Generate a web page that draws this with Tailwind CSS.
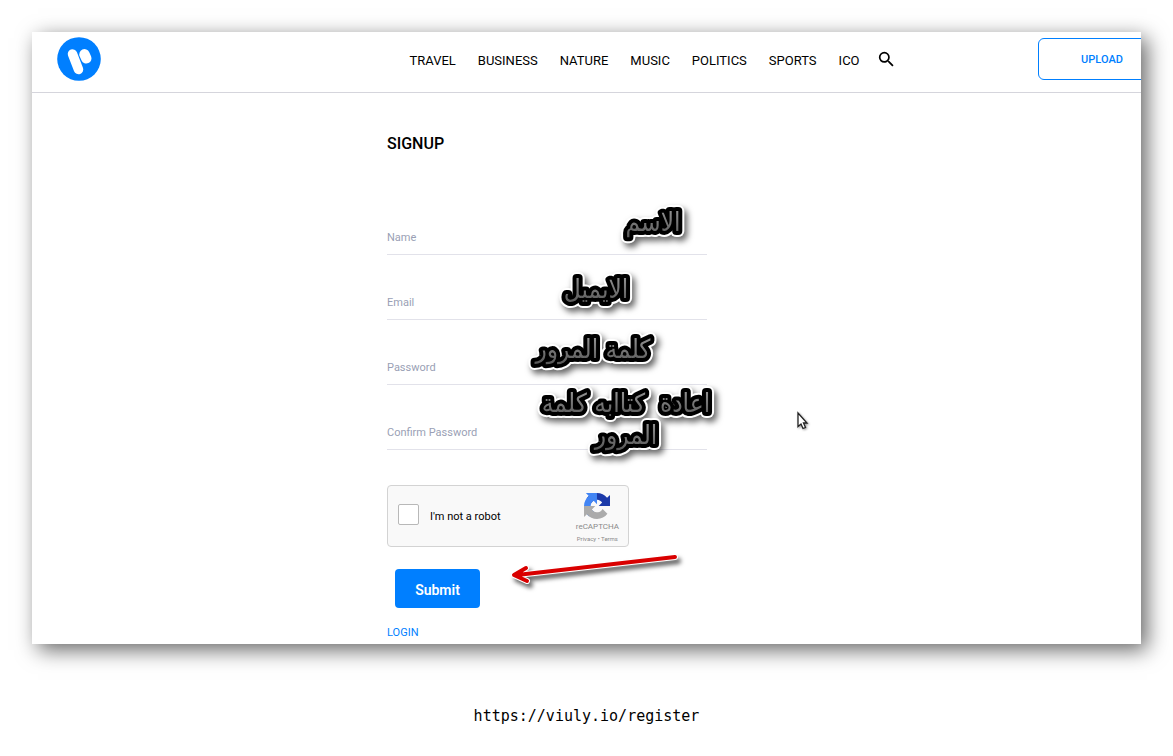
<!DOCTYPE html>
<html lang="en">
<head>
  <meta charset="UTF-8" />
  <meta name="viewport" content="width=device-width, initial-scale=1.0" />
  <title>Viuly - Signup</title>
  <script src="https://cdn.jsdelivr.net/npm/@tailwindcss/browser@4"></script>
</head>
<body class="bg-white text-black font-[Roboto,sans-serif] p-8">
  <div class="bg-white shadow-[6px_6px_20px_rgba(0,0,0,0.6)]">

    <!-- Header -->
    <header class="flex items-center h-[61px] pb-1.5 px-[25px] border-b border-[#d5d5dc] overflow-hidden">
      <a href="#" aria-label="Viuly" class="shrink-0">
        <svg class="size-11" viewBox="0 0 44 44">
          <circle cx="22" cy="22" r="21.8" fill="#007fff" />
          <path d="M15.5 17 L21.5 32.5" stroke="#fff" stroke-width="9.5" stroke-linecap="round" />
          <path d="M27.5 17.3 L29.3 21.3" stroke="#fff" stroke-width="10.4" stroke-linecap="round" />
        </svg>
      </a>
      <nav class="flex flex-1 items-center justify-center gap-[22px] pl-[164px] pt-1 text-[13px]">
        <a href="#">TRAVEL</a>
        <a href="#">BUSINESS</a>
        <a href="#">NATURE</a>
        <a href="#">MUSIC</a>
        <a href="#">POLITICS</a>
        <a href="#">SPORTS</a>
        <a href="#">ICO</a>
        <button type="button" aria-label="Search" class="-ml-1 pb-1">
          <svg class="size-4" viewBox="2 2 19 19" fill="currentColor">
            <path d="M15.5 14h-.79l-.28-.27A6.47 6.47 0 0 0 16 9.5 6.5 6.5 0 1 0 9.5 16c1.61 0 3.09-.59 4.23-1.57l.27.28v.79l5 4.99L20.49 19l-4.99-5zm-6 0C7.01 14 5 11.99 5 9.5S7.01 5 9.5 5 14 7.01 14 9.5 11.99 14 9.5 14z" />
          </svg>
        </button>
      </nav>
      <button type="button" class="shrink-0 w-32 h-[42px] -mr-[50px] pt-0.5 rounded-md border border-[#007fff] text-[#007fff] text-[11px] font-medium">UPLOAD</button>
    </header>

    <!-- Signup form -->
    <main class="relative max-w-[399px] mx-auto pt-[39px] pb-1">
      <h1 class="text-base leading-6 font-medium mb-[34px]">SIGNUP</h1>
      <form class="max-w-80 text-[11px]">
        <div class="grid items-center pt-8">
          <label for="name" class="[grid-area:1/1] text-[#9a9fb5]">Name</label>
          <input id="name" type="text" class="[grid-area:1/1] w-full h-[33px] border-b border-[#e2e2ea] outline-none" />
        </div>
        <div class="grid items-center pt-8">
          <label for="email" class="[grid-area:1/1] text-[#9a9fb5]">Email</label>
          <input id="email" type="email" class="[grid-area:1/1] w-full h-[33px] border-b border-[#e2e2ea] outline-none" />
        </div>
        <div class="grid items-center pt-8">
          <label for="password" class="[grid-area:1/1] text-[#9a9fb5]">Password</label>
          <input id="password" type="password" class="[grid-area:1/1] w-full h-[33px] border-b border-[#e2e2ea] outline-none" />
        </div>
        <div class="grid items-center pt-8">
          <label for="confirm" class="[grid-area:1/1] text-[#9a9fb5]">Confirm Password</label>
          <input id="confirm" type="password" class="[grid-area:1/1] w-full h-[33px] border-b border-[#e2e2ea] outline-none" />
        </div>

        <!-- reCAPTCHA -->
        <div class="flex items-center w-[242px] h-[62px] mt-[35px] pl-[10px] pr-[9px] rounded-sm border border-[#d3d3d3] bg-[#f9f9f9]">
          <input id="robot" type="checkbox" class="appearance-none size-[21px] mb-1 rounded-xs border border-[#b8b8b8] bg-white" />
          <label for="robot" class="ml-[11px] pt-0.5">I'm not a robot</label>
          <div class="ml-auto pt-1 flex flex-col items-center text-[#8a8a8a]">
            <svg class="size-[26px]" viewBox="0 0 64 64">
              <path d="M64 31.96c0-.46-.01-.92-.03-1.37V4.64l-7.2 7.17C50.9 4.64 41.97 0 31.96 0 21.5 0 12.3 4.97 6.4 12.7l11.8 11.9a15.6 15.6 0 0 1 4.8-5.4c2-1.6 4.8-2.8 8.8-2.8.5 0 .9.06 1.1.15 4.9.4 9.2 3.1 11.7 7.1l-8.4 8.35L64 31.96" fill="#1c3aa9" />
              <path d="M31.86 0c-.46 0-.91.01-1.37.03H4.55l7.17 7.2C4.68 13.1.04 22 .04 32.04c0 10.46 4.97 19.65 12.7 25.5l11.9-11.8a15.6 15.6 0 0 1-5.4-4.8c-1.6-2-2.8-4.8-2.8-8.8 0-.5.06-.9.15-1.1.4-4.9 3.1-9.2 7.1-11.7l8.35 8.4L31.86 0" fill="#4285f4" />
              <path d="M.04 32.04c0 .46.01.91.03 1.37v25.94l7.2-7.17C13.14 59.36 22.04 64 32.08 64c10.46 0 19.65-4.97 25.5-12.7L45.78 39.4a15.6 15.6 0 0 1-4.8 5.4c-2 1.6-4.8 2.8-8.8 2.8-.5 0-.9-.06-1.1-.15-4.9-.4-9.2-3.1-11.7-7.1l8.4-8.35L.04 32.04" fill="#ababab" />
            </svg>
            <span class="text-[8px] leading-4">reCAPTCHA</span>
            <span class="text-[6px] leading-2"><a href="#">Privacy</a> • <a href="#">Terms</a></span>
          </div>
        </div>

        <button type="submit" class="block w-[85px] h-[39px] mt-[22px] ml-2 pt-0.5 rounded bg-[#007fff] text-white text-sm font-semibold">Submit</button>
      </form>
      <a href="#" class="block w-fit pt-[17px] -mb-px text-[11px] leading-4 text-[#007fff]">LOGIN</a>

      <!-- Hand-placed notes over the form -->
      <svg class="absolute top-0 left-0 w-[399px] h-[551px] overflow-visible pointer-events-none" viewBox="0 0 399 551">
        <defs>
          <linearGradient id="ink" x1="0" y1="0" x2="0" y2="1">
            <stop offset="0" stop-color="#999" />
            <stop offset="1" stop-color="#555" />
          </linearGradient>
          <g id="notes" class="font-['DejaVu_Sans_Condensed','DejaVu_Sans',sans-serif] text-[26px]" text-anchor="middle" direction="rtl">
            <text x="266" y="138">الاسم</text>
            <text x="209" y="205">الايميل</text>
            <text x="206" y="265">كلمة المرور</text>
            <text x="239" y="319">اعادة&nbsp; كتاابه كلمة</text>
            <text x="239" y="351">المرور</text>
          </g>
        </defs>
        <g class="drop-shadow-[3px_4px_3px_rgba(0,0,0,0.6)]" stroke-linejoin="round">
          <use href="#notes" fill="#fff" stroke="#fff" stroke-width="12" />
          <use href="#notes" fill="#000" stroke="#000" stroke-width="8" />
          <use href="#notes" fill="url(#ink)" />
        </g>
        <g class="drop-shadow-[3px_4px_2px_rgba(0,0,0,0.6)]" fill="none" stroke-linecap="round" stroke-linejoin="round">
          <path d="M288 464 L130 482 M139 475 L127 482 L140 488" stroke="#fff" stroke-width="6" />
          <path d="M288 464 L130 482 M139 475 L127 482 L140 488" stroke="#d90000" stroke-width="4" />
        </g>
        <path class="drop-shadow-[1px_1px_1px_rgba(0,0,0,0.4)]" d="M411 320 V333.5 L414 331 L416 335.5 L418.5 334.5 L416.5 330 H420 Z" fill="#fff" stroke="#222" stroke-width="1.3" />
      </svg>
    </main>
  </div>

  <p class="mt-[60px] text-center text-[15px] leading-6 font-['DejaVu_Sans_Mono',monospace]">https://viuly.io/register</p>
</body>
</html>
